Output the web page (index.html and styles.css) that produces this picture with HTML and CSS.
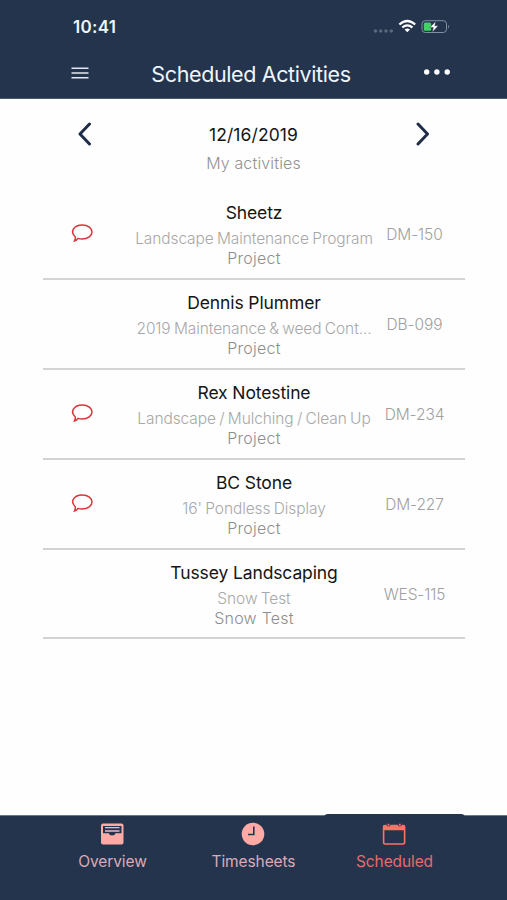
FILE: index.html
```html
<!DOCTYPE html>
<html lang="en">
<head>
<meta charset="utf-8">
<title>Scheduled Activities</title>
<link rel="stylesheet" href="styles.css">
</head>
<body>
<header class="header">
  <div class="status">
    <span class="time">10:41</span>
    <svg class="indicators" width="78" height="18" viewBox="0 0 78 18">
      <g fill="#5a687c"><circle cx="3.500" cy="13" r="1.800"/><circle cx="8.700" cy="13" r="1.800"/><circle cx="14" cy="13" r="1.800"/><circle cx="19.300" cy="13" r="1.800"/></g>
      <g fill="none" stroke="#fff" stroke-width="2.300"><path d="M27.400 6.500q7.800-7 15.800 0"/><path d="M30.300 9.500q5-4.300 10.100 0"/></g>
      <path d="M32.600 11.600q2.700-2 5.400 0l-2.700 2.700z" fill="#fff"/>
      <rect x="50" y="2.700" width="24.500" height="11.800" rx="3.200" fill="none" stroke="#8190a0"/>
      <path d="M76 6.500q1.800 2 0 4z" fill="#8190a0"/>
      <rect x="51.800" y="4.400" width="7.400" height="8.300" rx="1.500" fill="#43d264"/>
      <path d="M63.800 3.300L57.800 9.400h3.500l-1 4.800 6-6.400h-3.500z" fill="#fff" stroke="#24344c" stroke-width=".5"/>
    </svg>
  </div>
  <div class="titlebar">
    <svg class="menu" width="18" height="14" viewBox="0 0 18 14"><path d="M.5 2.300h17M.5 7h17M.5 11.700h17" stroke="#dfe8f2" stroke-width="1.400"/></svg>
    <h1 class="title">Scheduled Activities</h1>
    <svg class="more" width="28" height="8" viewBox="0 0 28 8" fill="#fff"><circle cx="3.700" cy="4" r="2.700"/><circle cx="13.900" cy="4" r="2.700"/><circle cx="24.200" cy="4" r="2.700"/></svg>
  </div>
</header>
<main class="content">
  <section class="datebar">
    <svg class="arrow" width="16" height="24" viewBox="0 0 16 24"><path d="M12.500 2L3 12l9.500 10"/></svg>
    <div class="dates"><div class="date">12/16/2019</div><div class="mine">My activities</div></div>
    <svg class="arrow" width="16" height="24" viewBox="0 0 16 24"><path d="M4 2l9.500 10L4 22"/></svg>
  </section>
  <ul class="list">
    <li class="row">
      <svg class="bubble" width="24" height="22" viewBox="0 0 24 22"><path d="M5.200 13.700C-.4 8.500 4 2 12.200 2 18.300 2 22 5.200 22 9s-4 7-10 7c-1.500 0-2.800-.2-4-.6-.8 1.300-2 2.300-3.500 2.500.8-1.300 1.100-2.500.7-4.200z"/></svg>
      <div class="info"><div class="name">Sheetz</div><div class="desc">Landscape Maintenance Program</div><div class="kind">Project</div></div>
      <span class="code">DM-150</span>
    </li>
    <li class="row">
      <div class="info"><div class="name">Dennis Plummer</div><div class="desc">2019 Maintenance &amp; weed Cont...</div><div class="kind">Project</div></div>
      <span class="code">DB-099</span>
    </li>
    <li class="row">
      <svg class="bubble" width="24" height="22" viewBox="0 0 24 22"><path d="M5.200 13.700C-.4 8.500 4 2 12.200 2 18.300 2 22 5.200 22 9s-4 7-10 7c-1.500 0-2.800-.2-4-.6-.8 1.300-2 2.300-3.500 2.500.8-1.300 1.100-2.500.7-4.200z"/></svg>
      <div class="info"><div class="name">Rex Notestine</div><div class="desc">Landscape / Mulching / Clean Up</div><div class="kind">Project</div></div>
      <span class="code">DM-234</span>
    </li>
    <li class="row">
      <svg class="bubble" width="24" height="22" viewBox="0 0 24 22"><path d="M5.200 13.700C-.4 8.500 4 2 12.200 2 18.300 2 22 5.200 22 9s-4 7-10 7c-1.500 0-2.800-.2-4-.6-.8 1.300-2 2.300-3.500 2.500.8-1.300 1.100-2.500.7-4.200z"/></svg>
      <div class="info"><div class="name">BC Stone</div><div class="desc">16' Pondless Display</div><div class="kind">Project</div></div>
      <span class="code">DM-227</span>
    </li>
    <li class="row">
      <div class="info"><div class="name">Tussey Landscaping</div><div class="desc">Snow Test</div><div class="kind">Snow Test</div></div>
      <span class="code">WES-115</span>
    </li>
  </ul>
</main>
<nav class="tabs">
  <div class="tab">
    <svg width="24" height="24" viewBox="0 0 24 24"><rect x="1" y="1.500" width="22.500" height="21" rx="2" fill="#ffaaa5"/><path d="M3 4h18.500v7.200h-6.200c0 3-6.300 3-6.300 0H3z" fill="#24344c"/><path d="M5 5.700h14.500M5 9h14.500" stroke="#e9bcc2" stroke-width="1.300"/></svg>
    <span>Overview</span>
  </div>
  <div class="tab">
    <svg width="24" height="24" viewBox="0 0 24 24"><circle cx="12" cy="12" r="11.300" fill="#ffaaa5"/><path d="M12.800 4.500v8H7" fill="none" stroke="#24344c" stroke-width="1.600"/></svg>
    <span>Timesheets</span>
  </div>
  <div class="tab active">
    <svg width="24" height="24" viewBox="0 0 24 24"><rect x="1.600" y="3.500" width="21" height="18.500" rx="1.700" fill="none" stroke="#fa7268" stroke-width="1.600"/><path d="M1.300 3h21.500v5.300H1.300zM5.500 1.700h1.800V4H5.500zM17 1.700h1.800V4H17z" fill="#fa7268"/><path d="M5 2v1.800h3V2M16.300 2v1.800h3V2" fill="none" stroke="#24344c" stroke-width=".7"/></svg>
    <span>Scheduled</span>
  </div>
</nav>
</body>
</html>
```

FILE: styles.css
```css
* { box-sizing: border-box; }
body {
  margin: 0;
  height: 900px;
  display: flex;
  flex-direction: column;
  overflow: hidden;
  background: #fefefe;
  color: #151515;
  font-family: Inter, "Liberation Sans", sans-serif;
}
.header { height: 99px; background: #24344c; color: #eef5fc; padding: 0 42px 0 43px; border-bottom: 1px solid #4a586c; }
.status { height: 54px; display: flex; justify-content: space-between; align-items: center; padding: 0 15px 0 30px; }
.time { font-size: 17px; font-weight: 600; letter-spacing: .3px; }
.titlebar { height: 40px; display: grid; grid-template-columns: 74px 1fr 74px; align-items: center; }
.menu { margin: -3px 0 0 28px; }
.title { margin: 0; padding-right: 6px; font-size: 21.500px; font-weight: 400; text-align: center; white-space: nowrap; letter-spacing: -.38px; }
.more { margin: -4px 0 0 32px; justify-self: start; }
.content { width: 422px; margin-left: 43px; flex: 1; }
.datebar { height: 91.400px; display: flex; justify-content: space-between; padding: 23px 35px 0 34px; }
.arrow { fill: none; stroke: #202d48; stroke-width: 3; stroke-linecap: round; stroke-linejoin: round; }
.dates { text-align: center; }
.date { font-size: 17.500px; line-height: 26px; letter-spacing: .1px; }
.mine { font-size: 16px; line-height: 31px; color: #929292; font-weight: 300; letter-spacing: .15px; }
.list { list-style: none; padding: 0; margin: 0; }
.row { height: 89.800px; display: grid; grid-template-columns: 82px 258px 63px; border-bottom: 2px solid #d3d3d3; }
.bubble { grid-column: 1; margin: 33px 0 0 27px; fill: none; stroke: #d9343a; stroke-width: 1.500; }
.info { grid-column: 2; text-align: center; white-space: nowrap; padding-top: 11px; }
.name { font-size: 17.500px; line-height: 24px; letter-spacing: -.12px; }
.desc { font-size: 15.500px; line-height: 27px; font-weight: 300; color: #a8a8a8; letter-spacing: -.1px; word-spacing: -.9px; }
.kind { font-size: 16px; line-height: 12px; font-weight: 300; color: #8e8e8e; letter-spacing: .25px; }
.code { grid-column: 3; text-align: center; font-size: 15.500px; line-height: 20px; font-weight: 300; color: #a0a0a0; padding-top: 35px; white-space: nowrap; letter-spacing: -.1px; }
.tabs { height: 85px; background: #24344c; display: grid; grid-template-columns: repeat(3, 141px); padding-left: 42px; border-top: 1px solid #67788b; }
.tab { display: flex; flex-direction: column; align-items: center; padding-top: 6px; color: #dbaab8; font-size: 15.500px; line-height: 28px; letter-spacing: -.1px; }
.tab svg { flex: none; margin: 0 1px 2px 0; }
.active { margin-top: -2px; padding-top: 8px; background: #24344c; border-radius: 4px 4px 0 0; color: #e66b6b; }
```
